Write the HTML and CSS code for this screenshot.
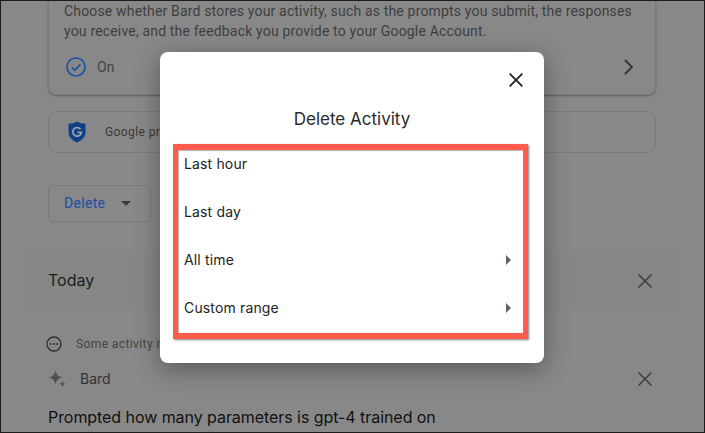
FILE: index.html
```html
<!DOCTYPE html>
<html>
  <head>
    <meta charset="utf-8">
    <title>Delete Activity</title>
    <link rel="stylesheet" href="styles.css">
  </head>
  <body>
    <div class="page">
      <section class="activity-card">
        <p class="activity-text">Choose whether Bard stores your activity, such as the prompts you submit, the responses you receive, and the feedback you provide to your Google Account.</p>
        <div class="activity-status">
          <svg class="status-icon" viewBox="0 0 20 20" width="20" height="20">
            <circle cx="10" cy="10" r="9" fill="none" stroke="#1a4fa8" stroke-width="1.6"/>
            <path d="M5.800 10.300l3 3 5.600-6" fill="none" stroke="#1a4fa8" stroke-width="1.600"/>
          </svg>
          <span class="status-label">On</span>
          <svg class="status-chevron" viewBox="0 0 12 16" width="12" height="16">
            <path d="M4 1l7 7-7 7" fill="none" stroke="#333" stroke-width="1.800"/>
          </svg>
        </div>
      </section>

      <section class="protect-card">
        <svg class="shield" viewBox="0 0 18 22" width="18" height="22">
          <path d="M9 0.500c2.400 1.400 5.300 2.200 8.500 2.300v8.200c0 4.800-3.500 8.500-8.500 10.500-5-2-8.500-5.700-8.500-10.500V2.800c3.200-0.100 6.100-0.900 8.500-2.300z" fill="#103f85"/>
          <path d="M12.500 8.200a4.300 4.300 0 1 0 0.900 3.200H9.400" fill="none" stroke="#9a9fa8" stroke-width="1.800"/>
        </svg>
        <span class="protect-label">Google protects your privacy</span>
      </section>

      <button class="delete-button">Delete <span class="caret"></span></button>

      <section class="today-card">
        <span class="today-label">Today</span>
        <svg class="dismiss" viewBox="0 0 14 14" width="14" height="14">
          <path d="M0.500 0.500l13 13M13.500 0.500l-13 13" stroke="#3c3c3c" stroke-width="1.500"/>
        </svg>
      </section>

      <div class="notice">
        <svg viewBox="0 0 16 16" width="16" height="16">
          <circle cx="8" cy="8" r="7" fill="none" stroke="#2e2e2e" stroke-width="1.300"/>
          <circle cx="4.800" cy="8" r="1" fill="#2e2e2e"/>
          <circle cx="8" cy="8" r="1" fill="#2e2e2e"/>
          <circle cx="11.200" cy="8" r="1" fill="#2e2e2e"/>
        </svg>
        <span class="notice-text">Some activity may not appear yet</span>
      </div>

      <div class="source-row">
        <svg class="sparkle" viewBox="0 0 18 18" width="18" height="18">
          <path d="M7.500 0c0.700 4.500 2.600 6.800 7.500 7.500-4.900 0.700-6.800 3-7.500 7.500-0.700-4.500-2.600-6.800-7.500-7.500 4.900-0.700 6.800-3 7.500-7.500z" fill="#505050"/>
          <path d="M14.500 10.800c0.300 1.900 1.200 2.900 3.400 3.200-2.200 0.300-3.100 1.300-3.400 3.400-0.300-2.100-1.200-3.100-3.400-3.400 2.200-0.300 3.100-1.300 3.400-3.200z" fill="#505050"/>
        </svg>
        <span class="source-label">Bard</span>
        <svg class="dismiss" viewBox="0 0 14 14" width="14" height="14">
          <path d="M0.500 0.500l13 13M13.500 0.500l-13 13" stroke="#3c3c3c" stroke-width="1.500"/>
        </svg>
      </div>

      <h2 class="prompt">Prompted how many parameters is gpt-4 trained on</h2>
    </div>

    <div class="dialog-layer">
      <div class="dialog">
        <div class="dialog-top">
          <svg viewBox="0 0 14 14" width="14" height="14">
            <path d="M0.700 0.700l12.600 12.600M13.300 0.700L0.700 13.300" stroke="#222" stroke-width="1.800"/>
          </svg>
        </div>
        <h1 class="dialog-title">Delete Activity</h1>
        <ul class="range-list">
          <li class="range">Last hour</li>
          <li class="range">Last day</li>
          <li class="range">All time <span class="arrow"></span></li>
          <li class="range">Custom range <span class="arrow"></span></li>
        </ul>
        <div class="highlight"></div>
      </div>
    </div>
  </body>
</html>
```

FILE: styles.css
```css
*, *:before, *:after {
  box-sizing: border-box;
}

html, body {
  margin: 0;
  padding: 0;
  height: 100%;
}

body {
  position: relative;
  overflow: hidden;
  background: #888;
  font-family: Roboto, "Liberation Sans", sans-serif;
  color: #3a3a3a;
}

ul {
  margin: 0;
  padding: 0;
  list-style: none;
}

/*----- PAGE BEHIND THE DIALOG -----*/

.page {
  height: 100%;
  padding: 0 24px 0 23px;
  border: 1px solid #1c1c1c;
  overflow: hidden;
}

.activity-card {
  height: 94px;
  margin: 0 24px;
  padding: 0 15px;
  border: 1px solid #7b7b7b;
  border-top: none;
  border-radius: 0 0 8px 8px;
  box-shadow: 0 1px 2px rgba(0,0,0,0.3);
}

.activity-text {
  margin: 0;
  font-size: 14px;
  line-height: 20px;
  letter-spacing: 0.17px;
  color: #3f3f3f;
}

.activity-status {
  display: flex;
  align-items: center;
  margin-top: 16px;
}

.status-icon {
  margin-left: 2px;
}

.status-label {
  margin-left: 11px;
  font-size: 14px;
  color: #444;
}

.status-chevron {
  margin-left: auto;
  margin-right: 7px;
}

.protect-card {
  display: flex;
  align-items: center;
  height: 42px;
  margin: 16px 24px 0;
  padding-left: 19px;
  border: 1px solid #7b7b7b;
  border-radius: 8px;
}

.protect-label {
  margin-left: 19px;
  font-size: 12px;
  letter-spacing: 0.4px;
  color: #3a3a3a;
}

.delete-button {
  display: flex;
  align-items: center;
  width: 103px;
  height: 37px;
  margin: 32px 0 0 24px;
  padding: 0 0 2px 15px;
  background: none;
  border: 1px solid #7b7b7b;
  border-radius: 4px;
  font-family: inherit;
  font-size: 14px;
  letter-spacing: 0.3px;
  color: #1c4fa8;
}

.caret {
  margin: 2px 0 0 16px;
  border-top: 5px solid #3a3a3a;
  border-left: 5px solid transparent;
  border-right: 5px solid transparent;
}

.today-card {
  display: flex;
  align-items: center;
  justify-content: space-between;
  height: 60px;
  margin-top: 29px;
  padding: 0 28px 0 24px;
  background: #858785;
  border-radius: 8px;
}

.today-label {
  padding-bottom: 2px;
  font-family: Inter, Roboto, sans-serif;
  font-size: 16px;
  color: #1d1d1d;
}

.notice {
  display: flex;
  align-items: center;
  height: 16px;
  margin: 25px 0 0 22px;
}

.notice-text {
  margin-left: 14px;
  font-size: 12px;
  letter-spacing: 0.4px;
  color: #444;
}

.source-row {
  display: flex;
  align-items: center;
  height: 18px;
  margin: 18px 28px 0 24px;
}

.source-label {
  margin-left: 14px;
  padding-bottom: 2px;
  font-family: Inter, Roboto, sans-serif;
  font-size: 14px;
  color: #333;
}

.source-row .dismiss {
  margin-left: auto;
}

.prompt {
  margin: 19px 0 0 24px;
  font-family: Inter, Roboto, sans-serif;
  font-size: 16px;
  font-weight: 400;
  line-height: 20px;
  letter-spacing: -0.06px;
  white-space: nowrap;
  color: #111;
}

/*----- DIALOG -----*/

.dialog-layer {
  position: absolute;
  top: 52px;
  left: 160px;
}

.dialog {
  position: relative;
  width: 384px;
  height: 311px;
  background: #fff;
  border-radius: 8px;
  box-shadow: 0 6px 24px rgba(0,0,0,0.35);
}

.dialog-top {
  display: flex;
  justify-content: flex-end;
  padding: 21px 21px 0 0;
  line-height: 0;
}

.dialog-title {
  margin: 20px 0 0;
  text-align: center;
  font-family: Inter, Roboto, sans-serif;
  font-size: 17px;
  font-weight: 400;
  line-height: 24px;
  color: #2a2a2a;
}

.range-list {
  margin-top: 9px;
}

.range {
  display: flex;
  align-items: center;
  justify-content: space-between;
  height: 48px;
  padding: 0 33px 2px 24px;
  font-family: Inter, Roboto, sans-serif;
  font-size: 14px;
  letter-spacing: 0.15px;
  color: #222;
}

.arrow {
  margin-top: 2px;
  border-left: 5px solid #5f6368;
  border-top: 5px solid transparent;
  border-bottom: 5px solid transparent;
}

.highlight {
  position: absolute;
  top: 92px;
  left: 13px;
  width: 355px;
  height: 195px;
  border: solid #ff5c4d;
  border-width: 6px 5px;
  box-shadow: 1px 1px 2px rgba(0,0,0,0.5), inset 1px 1px 1px rgba(0,0,0,0.3);
}
```
